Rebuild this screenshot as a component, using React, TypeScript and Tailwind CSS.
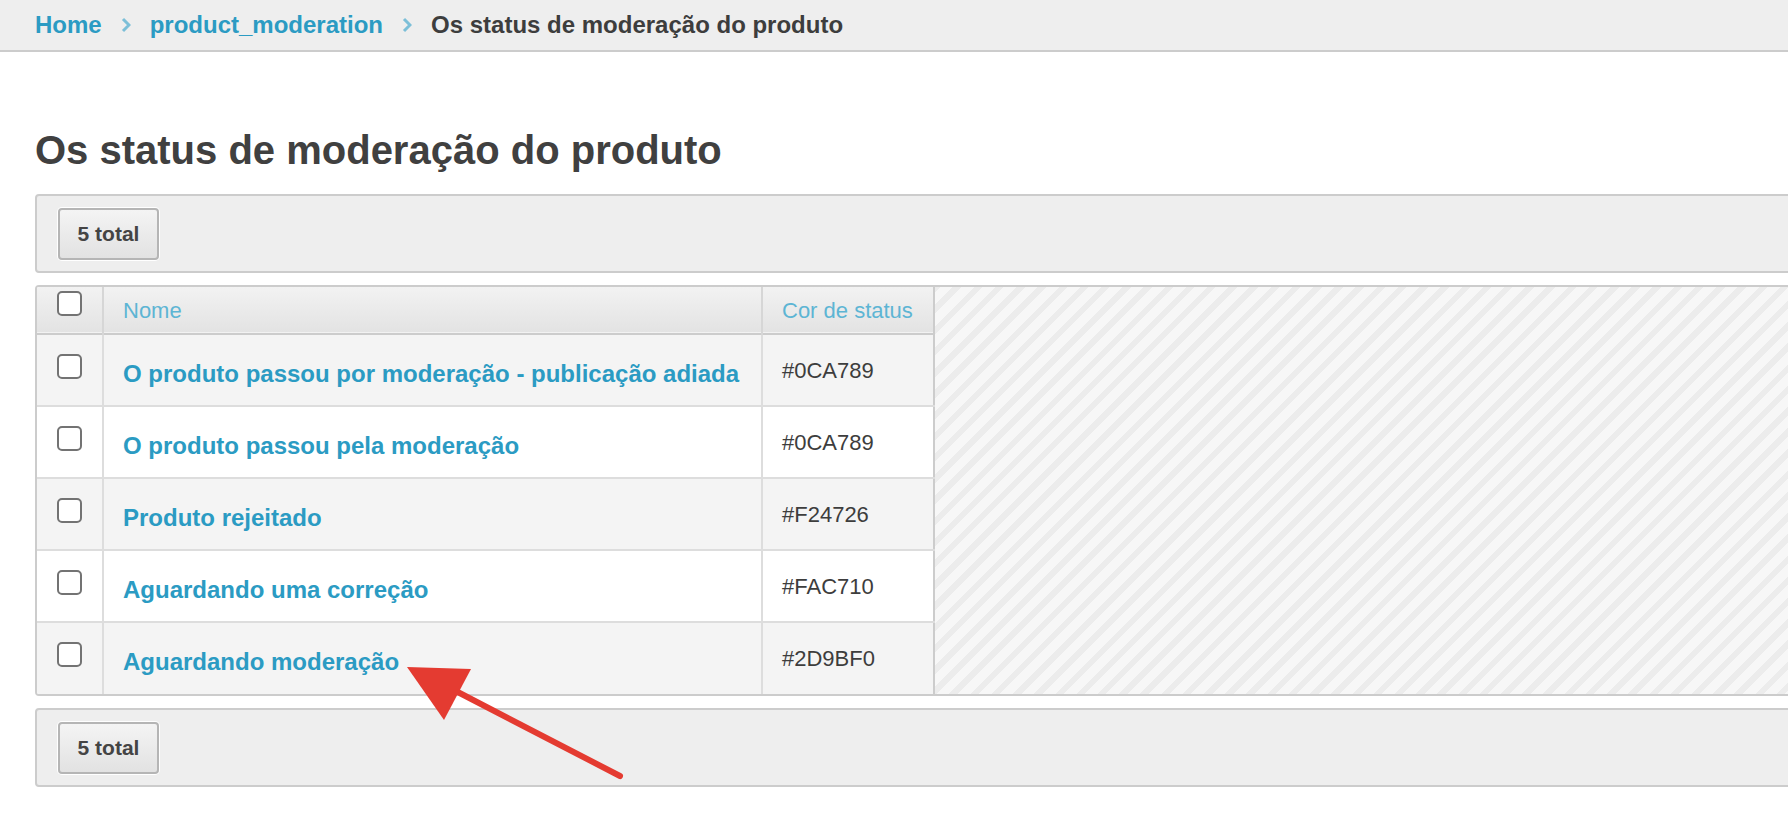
import React from "react";

const statuses = [
  { name: "O produto passou por moderação - publicação adiada", color: "#0CA789" },
  { name: "O produto passou pela moderação", color: "#0CA789" },
  { name: "Produto rejeitado", color: "#F24726" },
  { name: "Aguardando uma correção", color: "#FAC710" },
  { name: "Aguardando moderação", color: "#2D9BF0" },
];

function Chevron() {
  return (
    <svg width="10" height="16" viewBox="0 0 10 16" className="shrink-0">
      <path d="M2 2 L8 8 L2 14" fill="none" stroke="#7cbfd8" strokeWidth="3" />
    </svg>
  );
}

function Checkbox() {
  return <div className="mx-auto h-[25px] w-[25px] rounded-[5px] border-2 border-[#737373] bg-white" />;
}

function TotalBar() {
  return (
    <div className="mr-[-20px] flex h-[79px] items-center rounded-l-[4px] border-2 border-[#cccccc] bg-[#eeeeee] pl-[20px]">
      <div className="rounded-[5px] bg-white p-px">
        <div className="flex h-[52px] w-[101px] items-center justify-center rounded-[4px] border-2 border-[#b5b5b5] bg-gradient-to-b from-[#f4f4f4] to-[#e2e2e2] text-[21px] font-bold text-[#444]">
          5 total
        </div>
      </div>
    </div>
  );
}

export default function App() {
  return (
    <div className="relative min-h-screen overflow-hidden bg-white font-['Liberation_Sans',Arial,sans-serif] text-[#404040]">
      <nav className="flex h-[52px] items-center gap-[19px] border-b-2 border-[#cccccc] bg-[#eeeeee] pl-[35px] text-[24px] font-bold">
        <span className="text-[#2b9bc3]">Home</span>
        <Chevron />
        <span className="text-[#2b9bc3]">product_moderation</span>
        <Chevron />
        <span className="text-[#3d3d3d]">Os status de moderação do produto</span>
      </nav>

      <main className="pl-[35px]">
        <h1 className="mt-[74px] mb-[20px] text-[40px] font-bold leading-[48px] text-[#404040]">
          Os status de moderação do produto
        </h1>

        <TotalBar />

        <div className="mt-[12px] mr-[-20px] overflow-hidden rounded-l-[4px] border-2 border-[#cccccc] bg-[repeating-linear-gradient(-45deg,#ececec_0_6px,#f7f7f7_6px_15px)]">
          <table className="w-[898px] border-collapse border-r-2 border-[#cccccc] bg-white">
            <thead>
              <tr className="h-[47px] border-b-2 border-[#cccccc] bg-gradient-to-b from-[#f2f2f2] to-[#e3e3e3]">
                <th className="w-[66px] border-r-2 border-[#d6d6d6] pt-[4px] align-top">
                  <Checkbox />
                </th>
                <th className="w-[659px] border-r-2 border-[#d6d6d6] pl-[19px] text-left text-[22px] font-normal text-[#5db5d4]">
                  Nome
                </th>
                <th className="pl-[19px] text-left text-[22px] font-normal text-[#5db5d4]">Cor de status</th>
              </tr>
            </thead>
            <tbody>
              {statuses.map((s, i) => (
                <tr
                  key={s.name}
                  className={`h-[72px] ${i < statuses.length - 1 ? "border-b-2 border-[#dddddd]" : ""} ${i % 2 === 0 ? "bg-[#f4f4f4]" : "bg-white"}`}
                >
                  <td className="border-r-2 border-[#dddddd] pt-[19px] align-top">
                    <Checkbox />
                  </td>
                  <td className="border-r-2 border-[#dddddd] pl-[19px] pt-[7px] text-[24px] font-bold text-[#2b9bc3]">
                    {s.name}
                  </td>
                  <td className="pl-[19px] text-[22px] text-[#3d3d3d]">{s.color}</td>
                </tr>
              ))}
            </tbody>
          </table>
        </div>

        <div className="mt-[12px]">
          <TotalBar />
        </div>
      </main>

      <svg className="pointer-events-none absolute left-0 top-0" width="1788" height="834">
        <line x1="620" y1="776" x2="450" y2="688" stroke="#e43b31" strokeWidth="6" strokeLinecap="round" />
        <polygon points="407,667 471,669 444,720" fill="#e43b31" />
      </svg>
    </div>
  );
}
